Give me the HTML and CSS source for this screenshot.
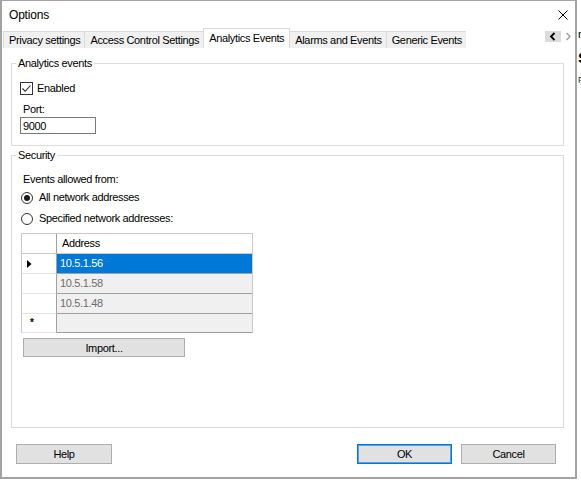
FILE: index.html
```html
<!DOCTYPE html>
<html>
<head>
<meta charset="utf-8">
<link rel="stylesheet" href="styles.css">
</head>
<body>
<div class="screen">
  <div class="dialog">
    <div class="titlebar">
      <span class="title">Options</span>
      <svg class="close" width="10" height="10" viewBox="0 0 10 10"><path d="M0.5 0.5 L9.5 9.5 M9.5 0.5 L0.5 9.5" stroke="#000" stroke-width="1" fill="none"/></svg>
    </div>
    <div class="tabrow">
      <div class="tab">Privacy settings</div>
      <div class="tab">Access Control Settings</div>
      <div class="tab active">Analytics Events</div>
      <div class="tab">Alarms and Events</div>
      <div class="tab">Generic Events</div>
      <div class="tab-spacer"></div>
      <div class="tab-scroll">
        <span class="scroll-btn prev"><svg width="8" height="9" viewBox="0 0 8 9"><path d="M5.5 1 L2 4.5 L5.5 8" stroke="#000" stroke-width="1.8" fill="none"/></svg></span>
        <span class="scroll-btn next"><svg width="8" height="9" viewBox="0 0 8 9"><path d="M2.5 1 L6 4.5 L2.5 8" stroke="#9a9a9a" stroke-width="1.3" fill="none"/></svg></span>
      </div>
    </div>
    <div class="panel">
      <fieldset class="group group-analytics">
        <legend>Analytics events</legend>
        <div class="check-row">
          <span class="checkbox"><svg width="11" height="11" viewBox="0 0 11 11"><path d="M1.5 5.5 L4.2 8.3 L9.5 2.5" stroke="#222" stroke-width="1.1" fill="none"/></svg></span>
          <span>Enabled</span>
        </div>
        <div class="field-label port-label">Port:</div>
        <div class="textbox">9000</div>
      </fieldset>
      <fieldset class="group group-security">
        <legend>Security</legend>
        <div class="field-label events-label">Events allowed from:</div>
        <div class="radio-row radio-first"><span class="radio checked"><span class="dot"></span></span><span>All network addresses</span></div>
        <div class="radio-row radio-second"><span class="radio"></span><span>Specified network addresses:</span></div>
        <div class="grid">
          <div class="grid-row grid-header"><div class="rh"></div><div class="cell">Address</div></div>
          <div class="grid-row selected"><div class="rh"><svg width="5" height="8" viewBox="0 0 5 8"><path d="M0 0 L4.5 4 L0 8 Z" fill="#000"/></svg></div><div class="cell">10.5.1.56</div></div>
          <div class="grid-row"><div class="rh"></div><div class="cell">10.5.1.58</div></div>
          <div class="grid-row"><div class="rh"></div><div class="cell">10.5.1.48</div></div>
          <div class="grid-row new-row"><div class="rh"><span class="star">*</span></div><div class="cell"></div></div>
        </div>
        <button class="btn import">Import...</button>
      </fieldset>
    </div>
    <div class="footer">
      <button class="btn help">Help</button>
      <span class="footer-spacer"></span>
      <button class="btn ok">OK</button>
      <button class="btn cancel">Cancel</button>
    </div>
  </div>
  <div class="backdrop">
    <span class="bd-n">n</span>
    <span class="bd-s">S</span>
    <span class="bd-f">F1</span>
  </div>
</div>
</body>
</html>
```
FILE: styles.css
```css
* { box-sizing: border-box; }
html, body {
  margin: 0;
  padding: 0;
  background: #fff;
}
body {
  width: 581px;
  height: 480px;
  overflow: hidden;
  font-family: "Liberation Sans", Arial, sans-serif;
  font-size: 11px;
  letter-spacing: -0.35px;
  line-height: 13px;
  color: #000;
}
.screen {
  display: flex;
  height: 480px;
}
.dialog {
  width: 577px;
  height: 479px;
  flex: none;
  display: flex;
  flex-direction: column;
  background: #fff;
  border-style: solid;
  border-color: #a3a3a3;
  border-width: 1px 2px 2px 2px;
}
.titlebar {
  height: 27px;
  flex: none;
  display: flex;
  align-items: center;
  justify-content: space-between;
  padding: 1px 7px 0 7px;
}
.title {
  font-size: 12px;
  letter-spacing: -0.2px;
}
.close { display: block; }

.tabrow {
  height: 20px;
  flex: none;
  display: flex;
  align-items: flex-end;
  padding-left: 1px;
  padding-right: 2px;
}
.tab {
  height: 17px;
  padding: 0 4px 0 5px;
  display: flex;
  align-items: center;
  background: #f0f0f0;
  border: 1px solid #dadada;
  border-bottom: none;
  border-right: none;
  white-space: nowrap;
}
.tab.active {
  height: 20px;
  background: #fff;
  border-right: 1px solid #dadada;
  padding: 0 5px 1px 5px;
}
.tab.active + .tab { border-left: none; }
.tab-spacer { flex: 1; }
.tab-scroll {
  display: flex;
  align-items: center;
  height: 20px;
  padding-bottom: 3px;
  gap: 1px;
}
.scroll-btn {
  height: 11px;
  display: flex;
  align-items: center;
  justify-content: center;
}
.scroll-btn.prev { background: #dcdcdc; width: 16px; }
.scroll-btn.next { width: 11px; }
.scroll-btn svg { display: block; }

.panel {
  flex: 1;
  display: flex;
  flex-direction: column;
  padding: 9px 11px 0 9px;
  gap: 3px;
}
.group {
  margin: 0;
  padding: 0;
  border: 1px solid #dcdcdc;
  min-width: 0;
}
.group legend {
  margin-left: 4px;
  padding: 0 2px;
}
.group-analytics {
  padding-bottom: 11px;
}
.group-security {
  flex: 1;
}
.check-row {
  display: flex;
  align-items: center;
  gap: 4px;
  margin: 12px 0 0 8px;
}
.checkbox {
  width: 13px;
  height: 13px;
  border: 1px solid #333;
  background: #fff;
  display: flex;
  align-items: center;
  justify-content: center;
}
.checkbox svg { display: block; }
.field-label {
  margin-left: 11px;
}
.port-label { margin-top: 8px; }
.textbox {
  margin: 1px 0 0 8px;
  width: 76px;
  height: 17px;
  border: 1px solid #7a7a7a;
  padding: 1px 0 0 2px;
  line-height: 14px;
}
.events-label { margin-top: 11px; }
.radio-row {
  display: flex;
  align-items: center;
  gap: 6px;
  margin-left: 9px;
  height: 13px;
}
.radio-first { margin-top: 5px; }
.radio-second { margin-top: 8px; }
.radio {
  width: 12px;
  height: 12px;
  border: 1px solid #333;
  border-radius: 50%;
  background: #fff;
  display: flex;
  align-items: center;
  justify-content: center;
}
.radio .dot {
  width: 6px;
  height: 6px;
  border-radius: 50%;
  background: #1a1a1a;
}
.grid {
  margin: 8px 0 0 9px;
  width: 232px;
  border: 1px solid #c9c9c9;
  border-bottom: none;
  display: flex;
  flex-direction: column;
}
.grid-row {
  display: flex;
  height: 20px;
}
.grid-row.new-row { height: 19px; }
.rh {
  width: 35px;
  flex: none;
  background: #fff;
  border-bottom: 1px solid #e3e3e3;
  border-right: 1px solid #a0a0a0;
  display: flex;
  align-items: center;
  padding-left: 5px;
}
.cell {
  flex: 1;
  background: #f0f0f0;
  color: #6d6d6d;
  border-bottom: 1px solid #a0a0a0;
  display: flex;
  align-items: center;
  padding-left: 3px;
}
.grid-header .cell {
  background: #fff;
  color: #000;
  padding-left: 5px;
  border-bottom: 1px solid #c9c9c9;
}
.grid-header .rh { border-bottom: 1px solid #c9c9c9; }
.grid-row.selected .cell {
  background: #0078d7;
  color: #fff;
}
.star {
  font-size: 10px;
  font-weight: bold;
  padding-left: 3px;
  line-height: 10px;
}
.btn {
  font-family: inherit;
  font-size: 11px;
  letter-spacing: -0.35px;
  color: #000;
  background: #e1e1e1;
  border: 1px solid #adadad;
  border-radius: 0;
  padding: 0;
  margin: 0;
  height: 20px;
}
.import {
  display: block;
  width: 162px;
  height: 19px;
  margin: 5px 0 0 11px;
}
.footer {
  flex: none;
  display: flex;
  align-items: flex-start;
  padding: 16px 19px 13px 14px;
  gap: 9px;
}
.footer-spacer { flex: 1; }
.help { width: 96px; }
.ok { width: 95px; border-color: #0078d7; box-shadow: inset 0 0 0 1px #5aa0e0; }
.cancel { width: 95px; }

.backdrop {
  flex: 1;
  overflow: hidden;
  display: flex;
  flex-direction: column;
  background: #fff;
  padding-left: 1px;
}
.bd-n { margin-top: 28px; font-size: 11px; line-height: 12px; }
.bd-s { margin-top: 10px; font-size: 15px; font-weight: bold; line-height: 16px; }
.bd-f { margin-top: 9px; font-size: 9px; line-height: 10px; color: #333; }
```
